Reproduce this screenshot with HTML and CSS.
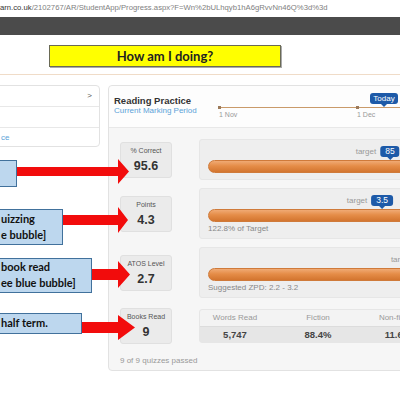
FILE: index.html
```html
<!DOCTYPE html>
<html lang="en">

<head>
    <meta charset="UTF-8">
    <meta name="viewport" content="width=device-width, initial-scale=1.0">
    <title>Progress</title>
    <link rel="stylesheet" href="styles.css">
</head>

<body>
    <div class="url"><span class="host">arn.co.uk</span>/2102767/AR/StudentApp/Progress.aspx?F=Wn%2bULhqyb1hA6gRvvNn46Q%3d%3d</div>
    <div class="topbar"></div>

    <div class="title-strip">
        <div class="title-box">How am I doing?</div>
    </div>

    <div class="content">
        <div class="side">
            <div class="side-row side-head">&gt;</div>
            <div class="side-row"></div>
            <div class="side-row side-link">ce</div>
        </div>

        <div class="panel">
            <div class="panel-head">
                <div class="panel-title">
                    <div class="name">Reading Practice</div>
                    <div class="period">Current Marking Period</div>
                </div>
                <!-- marking period timeline -->
                <div class="timeline">
                    <div class="tl-line"></div>
                    <span class="tl-dot" style="left:0px"></span>
                    <span class="tl-date" style="left:0px">1 Nov</span>
                    <span class="tl-dot" style="left:138px"></span>
                    <span class="tl-date" style="left:138px">1 Dec</span>
                    <span class="today" style="left:165px">Today</span>
                </div>
            </div>

            <div class="panel-body">
                <div class="stat">
                    <div class="tile-label">% Correct</div>
                    <div class="tile-value">95.6</div>
                </div>
                <div class="meter">
                    <div class="meter-head">
                        <span class="marker" style="left:85%"><span class="target">target</span>85</span>
                    </div>
                    <div class="bar"><div class="fill" style="width:95.6%"></div></div>
                </div>

                <div class="stat">
                    <div class="tile-label">Points</div>
                    <div class="tile-value">4.3</div>
                </div>
                <div class="meter">
                    <div class="meter-head">
                        <span class="marker" style="left:81.4%"><span class="target">target</span>3.5</span>
                    </div>
                    <div class="bar"><div class="fill" style="width:100%"></div></div>
                    <div class="meter-note">122.8% of Target</div>
                </div>

                <div class="stat">
                    <div class="tile-label">ATOS Level</div>
                    <div class="tile-value">2.7</div>
                </div>
                <div class="meter">
                    <div class="meter-head">
                        <span class="marker" style="left:102%"><span class="target">target</span>3.2</span>
                    </div>
                    <div class="bar"><div class="fill" style="width:100%"></div></div>
                    <div class="meter-note">Suggested ZPD: 2.2 - 3.2</div>
                </div>

                <div class="stat books">
                    <div class="tile-label">Books Read</div>
                    <div class="tile-value">9</div>
                </div>
                <div class="books-table books">
                    <div class="th">Words Read</div>
                    <div class="th">Fiction</div>
                    <div class="th">Non-fiction</div>
                    <div class="td">5,747</div>
                    <div class="td">88.4%</div>
                    <div class="td">11.6%</div>
                </div>
            </div>
            <div class="panel-foot">9 of 9 quizzes passed</div>
        </div>
    </div>

    <!-- annotations on top of the page -->
    <svg class="arrows" width="400" height="400" viewBox="0 0 400 400">
        <polygon points="10,167 118,167 118,159 129,171.5 118,184 118,176 10,176" />
        <polygon points="60,215 118,215 118,207 128,220 118,233 118,225 60,225" />
        <polygon points="88,269 118,269 118,261 130,274.5 118,288 118,280 88,280" />
        <polygon points="78,322 118,322 118,315 135,327.5 118,340 118,333 78,333" />
    </svg>
    <div class="callout note-1"></div>
    <div class="callout note-2">uizzing<br>e bubble]</div>
    <div class="callout note-3">book read<br>ee blue bubble]</div>
    <div class="callout note-4">half term.</div>
</body>

</html>
```

FILE: styles.css
```css
* {
    box-sizing: border-box;
}

body {
    margin: 0;
    width: 400px;
    height: 400px;
    overflow: hidden;
    position: relative;
    background: #fff;
    color: #333;
    font-family: "Liberation Sans", Arial, sans-serif;
}

.url {
    height: 17px;
    padding-top: 1px;
    font-size: 7.7px;
    line-height: 13px;
    color: #808080;
    white-space: nowrap;
}

.url .host {
    color: #333;
}

.topbar {
    height: 18px;
    background: #4b4b4b;
}

.title-strip {
    height: 40px;
    padding: 10px 0 0 49px;
    border-bottom: 1px solid #f0dcc8;
}

.title-box {
    width: 232px;
    height: 22px;
    background: #ffff00;
    border: 1px solid #6a6a55;
    box-shadow: 1px 1px 0 #aaa;
    text-align: center;
    font-family: Lato, "Liberation Sans", sans-serif;
    font-weight: bold;
    font-size: 13px;
    line-height: 20px;
    color: #222;
}

.content {
    display: flex;
    gap: 8px;
    margin-left: -10px;
    padding-top: 10px;
    width: max-content;
}

/* left menu card */
.side {
    width: 110px;
    height: 62px;
    background: #fff;
    border: 1px solid #e2e2e2;
    border-radius: 4px;
}

.side-row {
    height: 21px;
    border-bottom: 1px solid #e8e8e8;
    font-size: 8px;
    line-height: 20px;
}

.side-row:last-child {
    border-bottom: none;
    height: 18px;
}

.side-head {
    text-align: right;
    padding-right: 7px;
    color: #555;
}

.side-link {
    padding-left: 10px;
    color: #5ba2d8;
}

/* reading practice card */
.panel {
    width: 336px;
    background: #f6f6f6;
    border: 1px solid #e2e2e2;
    border-radius: 4px;
}

.panel-head {
    display: flex;
    height: 42px;
    background: #fdfdfd;
    border-bottom: 1px solid #e8e8e8;
    border-radius: 4px 4px 0 0;
}

.panel-title {
    width: 110px;
    padding: 9px 0 0 5px;
}

.name {
    font-size: 9.5px;
    font-weight: bold;
    line-height: 11px;
    color: #333;
}

.period {
    font-size: 8px;
    line-height: 10px;
    color: #5ba2d8;
    white-space: nowrap;
}

.timeline {
    position: relative;
    flex: 1;
}

.tl-line {
    position: absolute;
    left: 0;
    right: 0;
    top: 21px;
    height: 1px;
    background: #c99a6a;
}

.tl-dot {
    position: absolute;
    top: 20px;
    width: 3px;
    height: 3px;
    margin-left: -1px;
    background: #9c7a5a;
}

.tl-date {
    position: absolute;
    top: 24px;
    font-size: 7px;
    line-height: 9px;
    color: #999;
}

.today,
.marker {
    position: absolute;
    background: #1d5aa8;
    color: #fff;
    border-radius: 3px;
    text-align: center;
    white-space: nowrap;
}

.today {
    top: 7px;
    width: 28px;
    height: 11px;
    transform: translateX(-50%);
    font-size: 8px;
    line-height: 11px;
}

.today::after,
.marker::after {
    content: "";
    position: absolute;
    left: 50%;
    top: 100%;
    margin-left: -3px;
    border: 3px solid transparent;
    border-top-color: #1d5aa8;
}

.panel-body {
    display: grid;
    grid-template-columns: 52px 1fr;
    column-gap: 27px;
    row-gap: 8px;
    align-items: center;
    padding: 11px 12px 0 11px;
}

.stat {
    height: 36px;
    padding-top: 4px;
    background: #ebebeb;
    border: 1px solid #e0e0e0;
    border-radius: 3px;
    text-align: center;
}

.tile-label {
    font-size: 7px;
    line-height: 8px;
    color: #555;
}

.tile-value {
    margin-top: 2px;
    font-size: 12.5px;
    font-weight: bold;
    line-height: 18px;
    color: #333;
}

.meter {
    min-height: 41px;
    padding: 6px 8px 4px;
    background: #eeeeee;
    border: 1px solid #e6e6e6;
    border-radius: 3px;
}

.meter-head {
    position: relative;
    height: 14px;
}

.marker {
    top: 0;
    height: 11px;
    padding: 0 5px;
    transform: translateX(-50%);
    font-size: 8.5px;
    line-height: 11px;
}

.marker .target {
    position: absolute;
    right: 100%;
    margin-right: 4px;
    font-size: 8px;
    color: #999;
}

.bar {
    height: 13px;
}

.fill {
    height: 100%;
    border-radius: 7px;
    border: 1px solid #cf7a3a;
    background: linear-gradient(to bottom, #f0aa74 0%, #e58d48 45%, #d3752f 100%);
}

.meter-note {
    margin-top: 2px;
    font-size: 8px;
    line-height: 10px;
    color: #888;
}

.books {
    margin-top: 2px;
}

.books-table {
    display: grid;
    grid-template-columns: 70px 96px 1fr;
    height: 34px;
    border: 1px solid #e6e6e6;
    border-radius: 3px;
    background: #f3f3f3;
    text-align: center;
}

.th {
    height: 16px;
    font-size: 8px;
    line-height: 16px;
    color: #999;
}

.td {
    height: 16px;
    background: #e6e6e6;
    border-top: 1px solid #dcdcdc;
    font-size: 9.5px;
    font-weight: bold;
    line-height: 15px;
    color: #444;
}

.panel-foot {
    padding: 12px 0 4px 11px;
    font-size: 8px;
    line-height: 10px;
    color: #999;
}

/* callout notes and arrows */
.arrows {
    position: absolute;
    left: 0;
    top: 0;
    pointer-events: none;
}

.arrows polygon {
    fill: #f20c0c;
}

.callout {
    position: absolute;
    background: #bdd7ee;
    border: 1.5px solid #41719c;
    font-family: Lato, "Liberation Sans", sans-serif;
    font-weight: bold;
    font-size: 11px;
    line-height: 16px;
    color: #111;
    white-space: nowrap;
}

.note-1 {
    left: -20px;
    top: 160px;
    width: 37px;
    height: 27px;
}

.note-2 {
    left: -40px;
    top: 209px;
    width: 103px;
    height: 36px;
    padding: 1px 0 0 40px;
}

.note-3 {
    left: -40px;
    top: 258px;
    width: 132px;
    height: 35px;
    padding-left: 40px;
}

.note-4 {
    left: -40px;
    top: 313px;
    width: 122px;
    height: 21px;
    padding-left: 40px;
    line-height: 18px;
}
```
